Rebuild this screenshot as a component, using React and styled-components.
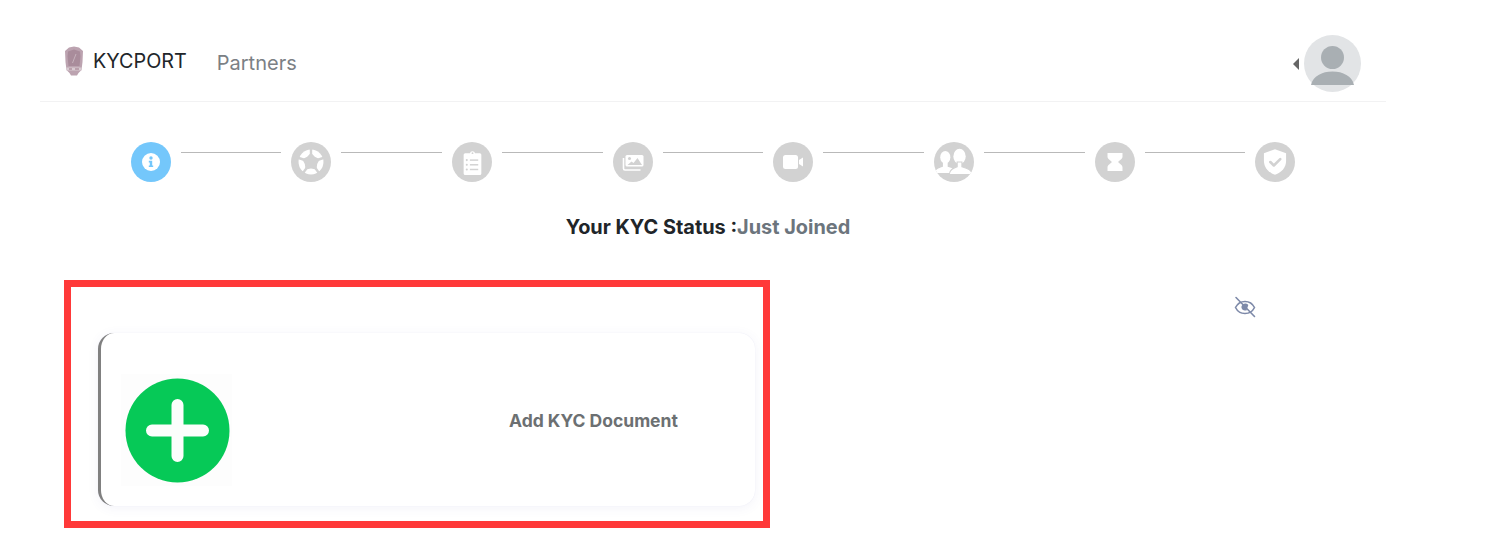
import React from "react";
import styled, { createGlobalStyle } from "styled-components";

const GlobalStyle = createGlobalStyle`
  html, body { margin: 0; padding: 0; background: #fff; }
  body { font-family: Inter, "Liberation Sans", sans-serif; }
`;

const Page = styled.div`
  width: 1346px;
  margin-left: 40px;
`;

const Header = styled.header`
  height: 102px;
  box-sizing: border-box;
  padding: 35px 25px 0 22px;
  border-bottom: 1px solid #f2f2f3;
  display: flex;
  align-items: flex-start;
`;

const Brand = styled.a`
  display: flex;
  align-items: center;
  gap: 7px;
  margin-top: 10px;
  font-size: 19.8px;
  line-height: 31px;
  color: #212529;
`;

const NavLink = styled.a`
  margin: 13px 0 0 30px;
  font-size: 20px;
  line-height: 30px;
  color: #7b8085;
`;

const UserMenu = styled.div`
  margin-left: auto;
  display: flex;
  align-items: center;
  gap: 5px;
`;

const Caret = styled.span`
  width: 0;
  height: 0;
  border-top: 6px solid transparent;
  border-bottom: 6px solid transparent;
  border-right: 6px solid #666;
`;

const Stepper = styled.div`
  display: flex;
  align-items: flex-start;
  padding: 40px 90.7px 0 90.75px;
`;

const Step = styled.div`
  width: 40px;
  height: 40px;
  flex: none;
  border-radius: 50%;
  overflow: hidden;
  background: ${(p) => (p.$active ? "#74c7fb" : "#d2d2d2")};
  display: flex;
  align-items: center;
  justify-content: center;
`;

const Line = styled.div`
  flex: 1;
  height: 1px;
  margin: 10px 10px 0;
  background: #b9b9b9;
`;

const Status = styled.div`
  margin: 33px 0 0;
  padding-right: 10px;
  text-align: center;
  font-size: 19.9px;
  line-height: 24px;
  font-weight: 650;
  color: #212529;
`;

const StatusValue = styled.span`
  color: #6c757d;
`;

const Content = styled.div`
  display: flex;
  align-items: flex-start;
  margin-top: 41px;
  padding-left: 24px;
`;

const Highlight = styled.section`
  width: 706px;
  height: 248px;
  box-sizing: border-box;
  border: 7px solid #ff3939;
  padding: 46px 8px 15px 27px;
`;

const Card = styled.div`
  height: 173px;
  box-sizing: border-box;
  border-left: 3px solid #808080;
  border-radius: 16px;
  background: #fff;
  box-shadow: 0 0 1px #e6e6f2, 0 2px 12px rgba(90, 90, 170, 0.07);
  display: flex;
  align-items: center;
  padding: 0 0 0 20px;
`;

const AddTile = styled.div`
  width: 111px;
  height: 112px;
  flex: none;
  box-sizing: border-box;
  padding-left: 1px;
  background: #fdfdfd;
  display: flex;
  align-items: center;
  justify-content: center;
  margin-top: 21px;
`;

const CardLabel = styled.div`
  margin: 2px 0 0 277px;
  font-size: 17.5px;
  font-weight: 700;
  color: #6c7072;
  white-space: nowrap;
`;

const EyeButton = styled.button`
  margin: 16px 0 0 464px;
  padding: 0;
  border: 0;
  background: none;
  display: flex;
  color: #7e8aa9;
`;

const Logo = () => (
  <svg width="24" height="32" viewBox="0 0 24 32">
    <path d="M3 6 7 2.500 12 1.500l5 1 4 3.500-.5 11-1 8-3 3-1.500 2.500h-6L7.500 28l-3-3-1-8z" fill="#bca3b0" />
    <path d="M6 6.500 12 4.500l6 2 .5 5-1 9.500H6.500l-1-9.500z" fill="#a98c9b" />
    <path d="m10.500 18 3.500-9" stroke="#c6b2bc" strokeWidth="1" />
    <path d="M4.500 22.500h15v3h-15z" fill="#d8cad1" />
    <path d="M7 24h3M13 24h4" stroke="#9c7688" strokeWidth="1.200" />
  </svg>
);

const Avatar = () => (
  <svg width="57" height="57" viewBox="0 0 57 57">
    <circle cx="28.500" cy="28.500" r="28.500" fill="#e2e4e6" />
    <circle cx="28.500" cy="22.500" r="11.500" fill="#a9afb3" />
    <path d="M7 50c2-9 11-13.500 21.500-13.500S48 41 50 50z" fill="#a9afb3" />
  </svg>
);

const EyeOff = () => (
  <svg width="22" height="22" viewBox="0 0 22 22" fill="none" stroke="currentColor" strokeWidth="1.600" strokeLinecap="round">
    <path d="M1.500 11.500C3.500 7.500 7 5.500 11 5.500s7.500 2 9.500 6c-2 4-5.500 6-9.500 6s-7.500-2-9.500-6z" />
    <path d="M7.500 10.500c.5-1.800 2-3 3.800-3 1.200 0 2.200.5 3 1.500l-1.800 5.500c-3 .5-5.500-1.500-5-4z" fill="currentColor" stroke="none" />
    <path d="M2 1.500 20.500 20.500" />
  </svg>
);

const Glyph = ({ children, size = 24 }) => (
  <svg width={size} height={size} viewBox="0 0 24 24" fill="#fff" style={{ flex: "none" }}>
    {children}
  </svg>
);

const stepIcons = [
  <Glyph key="info">
    <circle cx="12" cy="12" r="9" />
    <circle cx="12" cy="8" r="1.700" fill="#74c7fb" />
    <path d="M9.800 10.800h3.400v4.600h1v1.600H9.800v-1.600h1v-3h-1z" fill="#74c7fb" />
  </Glyph>,
  <Glyph key="wheel" size={26}>
    <circle cx="12" cy="12" r="11.500" />
    <g stroke="#d2d2d2" strokeWidth="2.200">
      <path d="M12 12V0" />
      <path d="M12 12 23.400 8.300" />
      <path d="M12 12 19 21.700" />
      <path d="M12 12 5 21.700" />
      <path d="M12 12 .6 8.300" />
    </g>
    <path d="M12 3.500 15.530 7.150 20.080 9.370 17.710 13.850 17 18.880 12 18 7 18.880 6.290 13.850 3.920 9.370 8.470 7.150z" fill="#d2d2d2" />
  </Glyph>,
  <Glyph key="clipboard" size={25}>
    <path d="M5 3h4.500a2.600 2.600 0 0 1 5 0H19a1.500 1.500 0 0 1 1.500 1.500v18A1.500 1.500 0 0 1 19 24H5a1.500 1.500 0 0 1-1.500-1.500v-18A1.500 1.500 0 0 1 5 3z" />
    <g fill="#d2d2d2">
      <rect x="9.500" y="9" width="8" height="1.400" />
      <rect x="9.500" y="13.500" width="8" height="1.400" />
      <rect x="9.500" y="18" width="8" height="1.400" />
      <circle cx="6.500" cy="9.700" r="1" />
      <circle cx="6.500" cy="14.200" r="1" />
      <circle cx="6.500" cy="18.700" r="1" />
      <circle cx="12" cy="3" r="0.900" />
    </g>
  </Glyph>,
  <Glyph key="images">
    <path d="M6 5h15a1.500 1.500 0 0 1 1.500 1.500V15a1.500 1.500 0 0 1-1.500 1.500H6A1.500 1.500 0 0 1 4.500 15V6.500A1.500 1.500 0 0 1 6 5z" />
    <circle cx="8.500" cy="8.500" r="1.500" fill="#d2d2d2" />
    <path d="m6.500 15 4-3.500 2 1.500 4-5 4.500 7z" fill="#d2d2d2" />
    <path d="M2.500 8v10.500A1.500 1.500 0 0 0 4 20h15.500" fill="none" stroke="#fff" strokeWidth="1.600" />
  </Glyph>,
  <Glyph key="video">
    <rect x="2" y="5" width="15" height="14" rx="2.500" />
    <path d="m18 10 4-2.500v9L18 14z" />
  </Glyph>,
  <Glyph key="users" size={38}>
    <ellipse cx="6.500" cy="9" rx="3.200" ry="4" />
    <path d="M0 19c0-2 2-3 5-4v-2.500h3V15l3 1-1.500 3z" />
    <ellipse cx="15.500" cy="8.500" rx="3.900" ry="4.800" />
    <path d="M9 20c0-3 2.500-4 5-5v-3h3v3c3.500 1 6.500 2 6.500 5z" stroke="#d2d2d2" strokeWidth="0.700" />
  </Glyph>,
  <Glyph key="hourglass">
    <path d="M4.500 3h15v3.500c0 2.500-3 3.800-4.500 5.500 1.500 1.700 4.500 3 4.500 5.500V21h-15v-3.500c0-2.500 3-3.800 4.500-5.500C7.500 10.300 4.500 9 4.500 6.500z" />
  </Glyph>,
  <Glyph key="shield" size={28}>
    <path d="M12 1 21.500 4.500v6.500c0 5.800-3.800 10-9.500 12-5.700-2-9.500-6.200-9.500-12V4.500z" />
    <path d="m8 12 3 3 5.500-5.500" fill="none" stroke="#d2d2d2" strokeWidth="2.200" strokeLinecap="round" strokeLinejoin="round" />
  </Glyph>,
];

const AddIcon = () => (
  <svg width="105" height="105" viewBox="0 0 105 105">
    <circle cx="52.500" cy="52.500" r="52" fill="#06c957" />
    <path d="M52.500 27v51M27 52.500h51" stroke="#fbfefc" strokeWidth="12" strokeLinecap="round" />
  </svg>
);

export default function App() {
  return (
    <Page>
      <GlobalStyle />
      <Header>
        <Brand>
          <Logo />
          KYCPORT
        </Brand>
        <NavLink>Partners</NavLink>
        <UserMenu>
          <Caret />
          <Avatar />
        </UserMenu>
      </Header>
      <Stepper>
        {stepIcons.map((icon, i) => (
          <React.Fragment key={i}>
            {i > 0 && <Line />}
            <Step $active={i === 0}>{icon}</Step>
          </React.Fragment>
        ))}
      </Stepper>
      <Status>
        Your KYC Status :<StatusValue>Just Joined</StatusValue>
      </Status>
      <Content>
        <Highlight>
          <Card>
            <AddTile>
              <AddIcon />
            </AddTile>
            <CardLabel>Add KYC Document</CardLabel>
          </Card>
        </Highlight>
        <EyeButton>
          <EyeOff />
        </EyeButton>
      </Content>
    </Page>
  );
}
